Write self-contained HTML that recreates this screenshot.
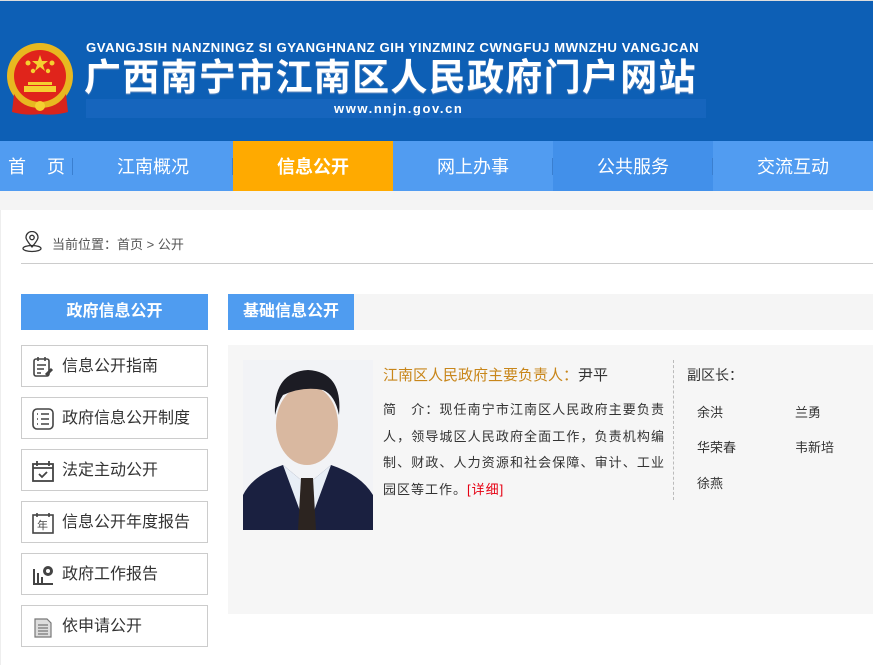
<!DOCTYPE html>
<html><head><meta charset="utf-8"><style>
*{margin:0;padding:0;box-sizing:border-box}
body{width:873px;height:665px;overflow:hidden;background:#fff;font-family:"Liberation Sans","Noto Sans CJK SC",sans-serif;position:relative}
.abs{position:absolute}
#hdr{left:0;top:0;width:873px;height:141px;background:#0d5fb5;border-top:1px solid #ddd}
.sub{left:86px;top:40px;color:#fff;font-weight:bold;font-size:13.2px;letter-spacing:0.55px;white-space:nowrap}
.title{left:84px;top:54px;color:#fff;font-weight:bold;font-size:37px;letter-spacing:1.3px;white-space:nowrap;line-height:48px;text-shadow:0 1px 1px #6a8fc0}
.urlbar{left:86px;top:99px;width:620px;height:19px;background:#1665bd}
.url{left:334px;top:101px;color:#fff;font-weight:bold;font-size:13px;letter-spacing:1.6px}
#nav{left:0;top:141px;width:873px;height:50px;background:#519cf1}
.ni{position:absolute;top:0;height:50px;line-height:52px;color:#fff;font-size:18px;text-align:center;white-space:nowrap}
.sep{position:absolute;top:17px;width:1px;height:17px;background:#3a7fd0}
#gray{left:0;top:191px;width:873px;height:19px;background:#f4f4f4}
.lstrip{left:0;top:210px;width:1px;height:455px;background:#eee}
.bc{left:52px;top:234px;font-size:13px;color:#555}
.bline{left:21px;top:263px;width:852px;height:1px;background:#ccc}
.lh{left:21px;top:294px;width:187px;height:36px;background:#4f9cf0;color:#fff;font-weight:bold;font-size:16px;text-align:center;line-height:36px}
.it{position:absolute;left:21px;width:187px;height:42px;border:1px solid #ccc;font-size:16px;color:#333;line-height:42px;padding-left:40px}
.it svg{position:absolute;left:10px;top:10px}
.rt{left:228px;top:294px;width:126px;height:36px;background:#4f9cf0;color:#fff;font-weight:bold;font-size:16px;text-align:center;line-height:36px}
.rs{left:354px;top:294px;width:519px;height:36px;background:#f5f5f5}
.box{left:228px;top:345px;width:645px;height:269px;background:#f6f6f6}
.photo{left:243px;top:360px;width:130px;height:170px;background:#f4f5f7;overflow:hidden}
.nm{left:383px;top:364px;font-size:15px;color:#c8861a;white-space:nowrap}
.nm span{color:#333}
.intro{left:383px;top:397px;width:282px;font-size:13px;letter-spacing:1px;color:#333;line-height:26.5px;text-align:justify}
.intro a{color:#e60012;text-decoration:none}
.dv{left:673px;top:360px;height:140px;border-left:1px dashed #bbb}
.v{position:absolute;font-size:13px;color:#333}
</style></head><body>
<div id="hdr" class="abs"></div>
<svg class="abs" style="left:6px;top:42px" width="68" height="74" viewBox="0 0 68 74">
<circle cx="34" cy="34" r="33" fill="#e8b820"/>
<circle cx="34" cy="34" r="26" fill="#e0241b"/>
<polygon points="34,13 36,19 42,19 37,23 39,29 34,25 29,29 31,23 26,19 32,19" fill="#f5d030"/>
<circle cx="22" cy="21" r="2.5" fill="#f5d030"/><circle cx="46" cy="21" r="2.5" fill="#f5d030"/>
<circle cx="27" cy="29" r="2.2" fill="#f5d030"/><circle cx="42" cy="29" r="2.2" fill="#f5d030"/>
<rect x="22" y="40" width="24" height="3" fill="#f5d030"/><rect x="18" y="44" width="32" height="6" fill="#f5d030"/>
<path d="M8 52 Q16 66 34 66 Q52 66 60 52 L62 70 Q48 74 34 72 Q20 74 6 70Z" fill="#d8241b"/>
<circle cx="34" cy="64" r="5" fill="#f5d030"/>
</svg>
<div class="abs urlbar"></div>
<div class="abs sub">GVANGJSIH NANZNINGZ SI GYANGHNANZ GIH YINZMINZ CWNGFUJ MWNZHU VANGJCAN</div>
<div class="abs title">广西南宁市江南区人民政府门户网站</div>
<div class="abs url">www.nnjn.gov.cn</div>
<div id="nav" class="abs">
<div class="ni" style="left:8px">首</div>
<div class="ni" style="left:47px">页</div>
<div class="sep" style="left:72px"></div>
<div class="ni" style="left:73px;width:160px">江南概况</div>
<div class="sep" style="left:232px"></div>
<div class="ni" style="left:233px;width:160px;background:#ffaa00;font-weight:bold">信息公开</div>
<div class="ni" style="left:393px;width:160px">网上办事</div>
<div class="sep" style="left:552px"></div>
<div class="ni" style="left:553px;width:160px;background:#4290ea">公共服务</div>
<div class="sep" style="left:712px"></div>
<div class="ni" style="left:713px;width:160px">交流互动</div>
</div>
<div id="gray" class="abs"></div>
<div class="abs lstrip"></div>
<svg class="abs" style="left:21px;top:231px" width="22" height="22" viewBox="0 0 22 22" fill="none" stroke="#333" stroke-width="1.3"><path d="M11 16 C6 10 5 8 5 6.5 A6 6 0 0 1 17 6.5 C17 8 16 10 11 16Z"/><circle cx="11" cy="6.5" r="2.2"/><ellipse cx="11" cy="17.5" rx="9" ry="3"/></svg>
<div class="abs bc">当前位置：首页 &gt; 公开</div>
<div class="abs bline"></div>
<div class="abs lh">政府信息公开</div>
<div class="it" style="top:345px"><svg width="22" height="22" viewBox="0 0 22 22" fill="none" stroke="#444" stroke-width="1.6"><rect x="2" y="3" width="15" height="17" rx="2"/><path d="M6 1v4M13 1v4M5 9h9M5 13h7M5 17h4"/><path d="M14 19l6-6" stroke-width="3"/></svg>信息公开指南</div>
<div class="it" style="top:397px"><svg width="22" height="22" viewBox="0 0 22 22" fill="none" stroke="#444" stroke-width="1.6"><rect x="1" y="1" width="20" height="20" rx="4"/><path d="M5 6h1M5 11h1M5 16h1M9 6h8M9 11h8M9 16h8"/></svg>政府信息公开制度</div>
<div class="it" style="top:449px"><svg width="22" height="22" viewBox="0 0 22 22" fill="none" stroke="#444" stroke-width="1.8"><rect x="1" y="4" width="20" height="17"/><path d="M1 8h20M5 1v5M17 1v5M7 14l3 3 5-5"/></svg>法定主动公开</div>
<div class="it" style="top:501px"><svg width="22" height="22" viewBox="0 0 22 22" fill="none" stroke="#444" stroke-width="1.6"><rect x="1" y="3" width="20" height="18"/><path d="M5 1v4M17 1v4"/><text x="5" y="17" font-size="11" fill="#444" stroke="none" font-family="Noto Sans CJK SC">年</text></svg>信息公开年度报告</div>
<div class="it" style="top:553px"><svg width="22" height="22" viewBox="0 0 22 22" fill="#444"><rect x="1" y="5" width="2" height="15"/><rect x="5" y="9" width="2" height="11"/><rect x="9" y="13" width="2" height="7"/><rect x="1" y="19" width="20" height="2"/><circle cx="16" cy="7" r="5"/><circle cx="16" cy="7" r="2" fill="#fff"/></svg>政府工作报告</div>
<div class="it" style="top:605px"><svg width="22" height="22" viewBox="0 0 22 22" fill="#ddd" stroke="#777" stroke-width="1.2"><path d="M3 3h12l4 4v14H3Z"/><path d="M6 9h10M6 12h10M6 15h10M6 18h10" fill="none"/></svg>依申请公开</div>
<div class="abs rt">基础信息公开</div>
<div class="abs rs"></div>
<div class="abs box"></div>
<div class="abs photo"><svg width="130" height="170" viewBox="0 0 130 170">
<rect width="130" height="170" fill="#f2f3f6"/>
<ellipse cx="64" cy="65" rx="31" ry="40" fill="#d9b8a0"/>
<path d="M32 55 Q30 12 65 10 Q100 12 96 55 Q92 35 80 30 Q60 26 40 35 Q35 42 32 55Z" fill="#1c1c24"/>
<path d="M0 135 Q10 115 40 105 L64 125 L88 105 Q118 115 130 135 V170 H0Z" fill="#1a2040"/>
<path d="M40 105 L64 170 L88 105 L64 125Z" fill="#e8eef6"/>
<path d="M58 118 L70 118 L73 170 L55 170Z" fill="#2c2420"/>
</svg></div>
<div class="abs nm">江南区人民政府主要负责人：<span>尹平</span></div>
<div class="abs intro">简　介：现任南宁市江南区人民政府主要负责人，领导城区人民政府全面工作，负责机构编制、财政、人力资源和社会保障、审计、工业园区等工作。<a>[详细]</a></div>
<div class="abs dv"></div>
<div class="v" style="left:687px;top:365px;font-size:14px">副区长：</div>
<div class="v" style="left:697px;top:402px">余洪</div>
<div class="v" style="left:795px;top:402px">兰勇</div>
<div class="v" style="left:697px;top:437px">华荣春</div>
<div class="v" style="left:795px;top:437px">韦新培</div>
<div class="v" style="left:697px;top:473px">徐燕</div>
</body></html>
